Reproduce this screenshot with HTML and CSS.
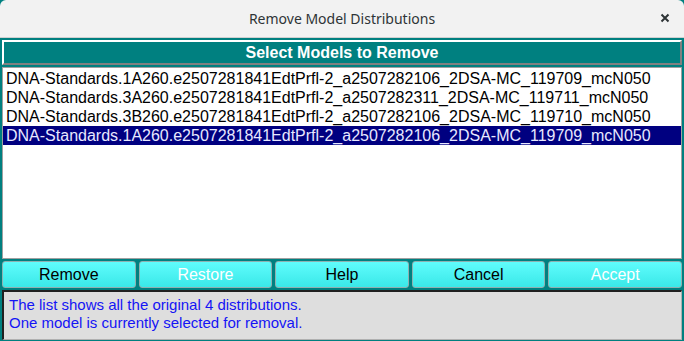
FILE: index.html
```html
<!DOCTYPE html>
<html lang="en">

<head>
    <meta charset="UTF-8">
    <title>Remove Model Distributions</title>
    <link rel="stylesheet" href="styles.css">
</head>

<body>
    <div class="titlebar">
        <span class="title">Remove Model Distributions</span>
        <span class="close">
            <svg width="10" height="10" viewBox="0 0 10 10">
                <path d="M1.5 1.5 L8.5 8.5 M8.5 1.5 L1.5 8.5" stroke="#2e3436" stroke-width="2" />
            </svg>
        </span>
    </div>

    <div class="dialog">
        <div class="banner">Select Models to Remove</div>

        <ul class="model-list">
            <li>DNA-Standards.1A260.e2507281841EdtPrfl-2_a2507282106_2DSA-MC_119709_mcN050</li>
            <li>DNA-Standards.3A260.e2507281841EdtPrfl-2_a2507282311_2DSA-MC_119711_mcN050</li>
            <li>DNA-Standards.3B260.e2507281841EdtPrfl-2_a2507282106_2DSA-MC_119710_mcN050</li>
            <li class="selected">DNA-Standards.1A260.e2507281841EdtPrfl-2_a2507282106_2DSA-MC_119709_mcN050</li>
        </ul>

        <div class="buttons">
            <button>Remove</button>
            <button class="disabled">Restore</button>
            <button>Help</button>
            <button>Cancel</button>
            <button class="disabled">Accept</button>
        </div>

        <div class="status">
            The list shows all the original 4 distributions.<br>
            One model is currently selected for removal.
        </div>
    </div>
</body>

</html>
```

FILE: styles.css
```css
body {
    margin: 0;
    padding: 0;
    width: 684px;
    height: 341px;
    overflow: hidden;
    background-color: #008080;
    font-family: "Liberation Sans", Arial, sans-serif;
}

.titlebar {
    height: 37px;
    background-color: #f2f2f2;
    border-bottom: 1px solid #d0d0d0;
    border-radius: 6px 6px 0 0;
    display: flex;
    align-items: center;
    justify-content: center;
    position: relative;
}

.title {
    font-family: "Noto Sans", sans-serif;
    font-size: 14px;
    color: #2e3436;
}

.close {
    position: absolute;
    right: 14px;
    top: 13px;
    width: 10px;
    height: 10px;
    display: flex;
}

.dialog {
    display: flex;
    flex-direction: column;
    padding: 2px 2px 0 2px;
}

.banner {
    height: 21px;
    border-top: 2px solid #ffffff;
    border-left: 2px solid #ffffff;
    border-bottom: 2px solid #808080;
    border-right: 2px solid #808080;
    color: #fff;
    font-weight: bold;
    font-size: 16px;
    text-align: center;
    line-height: 21px;
}

.model-list {
    list-style-type: none;
    margin: 2px 0 0 0;
    padding: 1px 0 0 0;
    height: 189px;
    background-color: #fff;
    border: 1px solid #a0a0a0;
}

.model-list li {
    height: 19px;
    line-height: 19px;
    font-size: 16px;
    padding-left: 3px;
    color: #000;
    white-space: nowrap;
}

.model-list li.selected {
    background-color: #000080;
    color: #e8e8ff;
}

.buttons {
    display: flex;
    gap: 3px;
    margin-top: 2px;
}

.buttons button {
    flex: 1;
    height: 27px;
    background: linear-gradient(#5ffcfc, #3ae8e8);
    border: 1px solid #8fb0b0;
    border-radius: 3px;
    font-family: "Liberation Sans", Arial, sans-serif;
    font-size: 16px;
    color: #000;
    padding: 0;
}

.buttons button.disabled {
    color: #fff;
}

.status {
    margin-top: 2px;
    height: 43px;
    background-color: #dedede;
    border-top: 2px solid #202020;
    border-left: 2px solid #202020;
    border-right: 1px solid #b0b0b0;
    border-bottom: 1px solid #b0b0b0;
    color: #1414f5;
    font-size: 15px;
    line-height: 18px;
    padding: 4px 0 0 5px;
}
```
